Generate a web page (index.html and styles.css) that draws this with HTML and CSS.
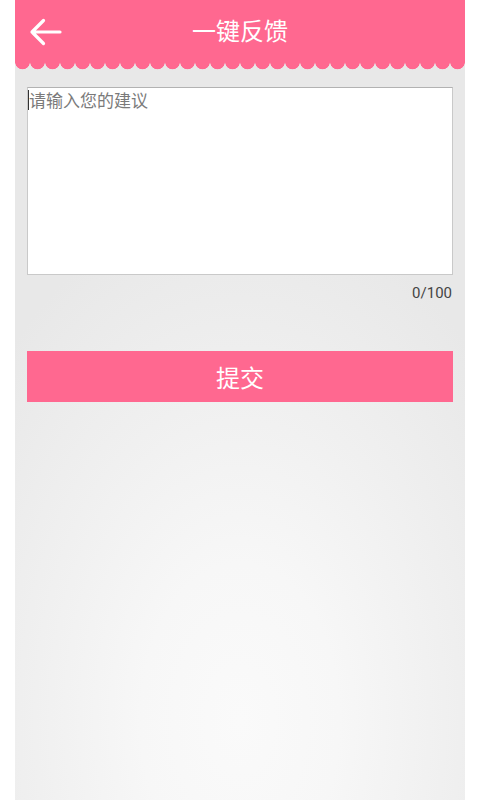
FILE: index.html
```html
<!DOCTYPE html>
<html lang="zh">
<head>
<meta charset="utf-8">
<title>一键反馈</title>
<link rel="stylesheet" href="styles.css">
</head>
<body>
<div class="app">
  <header class="topbar">
    <span class="back">
      <svg width="34" height="30" viewBox="0 0 34 30" fill="none" stroke="#fff" stroke-width="3.2" stroke-linecap="round" stroke-linejoin="round">
        <path d="M3 15 H31 M3 15 L14.5 3.5 M3 15 L14.5 26.5"/>
      </svg>
    </span>
    <h1 class="title">一键反馈</h1>
  </header>
  <div class="scallop"></div>
  <main class="content">
    <div class="input-box"><span class="caret"></span><span class="placeholder">请输入您的建议</span></div>
    <div class="counter">0/100</div>
    <button class="submit">提交</button>
  </main>
</div>
</body>
</html>
```

FILE: styles.css
```css
html, body {
  margin: 0;
  padding: 0;
  background: #ffffff;
  font-family: "Noto Sans CJK SC", "Noto Sans", sans-serif;
}
.app {
  width: 450px;
  height: 800px;
  margin: 0 auto;
  display: flex;
  flex-direction: column;
  background:
    radial-gradient(ellipse 330px 520px at 225px 720px, #fafafa 0%, #f7f7f7 30%, #f0f0f0 62%, #e8e8e8 100%);
  background-color: #e8e8e8;
  overflow: hidden;
}
.topbar {
  height: 62px;
  background: #ff6890;
  display: flex;
  align-items: center;
  justify-content: center;
  position: relative;
}
.back {
  position: absolute;
  left: 14px;
  top: 17px;
  display: flex;
}
.title {
  margin: 0;
  color: #ffffff;
  font-size: 24px;
  font-weight: 400;
  line-height: 1;
  padding-bottom: 2px;
}
.scallop {
  height: 8px;
  background-image: radial-gradient(circle at 7.5px 0, #ff6890 7px, rgba(255,104,144,0) 7.6px);
  background-size: 15px 8px;
  background-repeat: repeat-x;
}
.content {
  padding: 17px 12px 0;
  display: flex;
  flex-direction: column;
}
.input-box {
  height: 186px;
  background: #ffffff;
  border: 1px solid #c9c9c9;
  border-top-color: #b2b2b2;
  display: flex;
  align-items: flex-start;
}
.caret {
  width: 1px;
  height: 20px;
  margin-top: 2px;
  background: #333;
}
.placeholder {
  color: #7a7a7a;
  font-size: 17px;
  line-height: 24px;
  margin-left: 0;
}
.counter {
  text-align: right;
  color: #444;
  font-size: 15px;
  line-height: 20px;
  margin-top: 8px;
  padding-right: 1px;
  font-family: "Roboto", "Noto Sans", sans-serif;
}
.submit {
  margin-top: 48px;
  height: 51px;
  border: none;
  background: #ff6890;
  color: #ffffff;
  font-family: "Noto Sans CJK SC", sans-serif;
  font-size: 24px;
  padding: 0;
  cursor: pointer;
}
```
